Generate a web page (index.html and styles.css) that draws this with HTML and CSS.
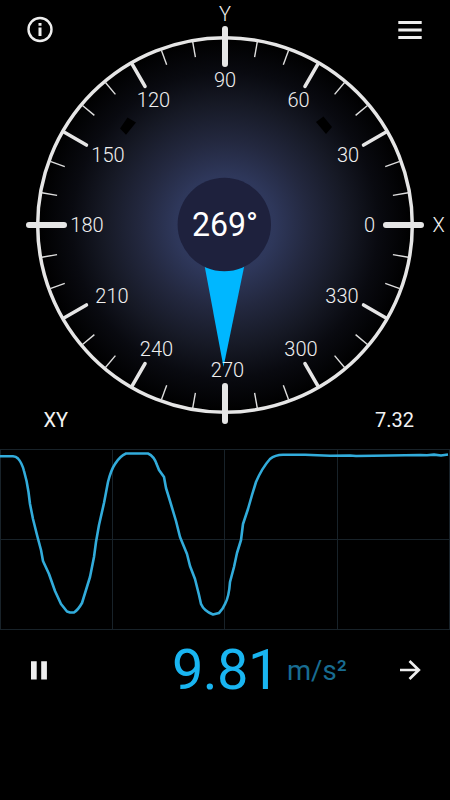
FILE: index.html
```html
<!DOCTYPE html>
<html lang="en">
<head>
<meta charset="utf-8">
<title>Accelerometer</title>
<link rel="stylesheet" href="styles.css">
</head>
<body>
<main class="app">
  <section class="gauge">
    <svg class="dial" width="450" height="440" viewBox="0 0 450 440">
      <defs>
        <radialGradient id="glow" gradientUnits="userSpaceOnUse" cx="225" cy="225" r="187">
          <stop offset="0" stop-color="#38436d"/>
          <stop offset=".27" stop-color="#2e375a"/>
          <stop offset=".45" stop-color="#23283f"/>
          <stop offset=".65" stop-color="#161925"/>
          <stop offset=".82" stop-color="#090a10"/>
          <stop offset="1" stop-color="#000"/>
        </radialGradient>
      </defs>
      <circle cx="225" cy="225" r="187.3" fill="url(#glow)" stroke="#e6e6e6" stroke-width="3.5"/>
      <path class="mark" d="M127.500 117.500L136 122.500L126 134.800L120 128.500Z"/>
      <path class="mark" d="M323.500 116.500L332 127L326 134L316 122Z"/>
      <g id="ticks"></g>
      <path class="cardinal" d="M29 225H64M386 225H421M225 29V64M225 386V421"/>
      <path class="needle" d="M203.5 260H245.500L223.500 367Z"/>
      <circle class="hub" cx="224.300" cy="224.500" r="46.700"/>
      <text class="heading" x="225" y="235.500" textLength="66" lengthAdjust="spacingAndGlyphs">269°</text>
      <g class="label">
        <text x="225" y="87">90</text><text x="298.500" y="107">60</text>
        <text x="348" y="162">30</text><text x="369.500" y="232">0</text>
        <text x="342" y="303">330</text><text x="301" y="356">300</text>
        <text x="227.500" y="377">270</text><text x="156.500" y="356">240</text>
        <text x="112" y="303">210</text><text x="87" y="232">180</text>
        <text x="108" y="162">150</text><text x="153.500" y="107">120</text>
        <text x="225" y="21">Y</text><text x="438.500" y="232">X</text>
      </g>
    </svg>
    <header class="toolbar">
      <svg width="28" height="28" viewBox="0 0 28 28"><circle cx="14" cy="14.500" r="11.500" fill="none" stroke="#eee" stroke-width="2.400"/><path fill="#eee" d="M12.500 8h3v2.800h-3zM12.500 12.500h3v8.500h-3z"/></svg>
      <svg width="28" height="28" viewBox="0 0 28 28"><path d="M2.300 7.500H25.700M2.300 15H25.700M2.300 22.500H25.700" stroke="#eee" stroke-width="2.800"/></svg>
    </header>
    <div class="readings"><span>XY</span><span>7.32</span></div>
  </section>
  <svg class="chart" width="450" height="200" viewBox="0 440 450 200">
    <path class="grid" d="M0 449.500H450M0 539.500H450M0 629.500H450M.5 450V630M112.500 450V630M224.500 450V630M337.500 450V630M449.500 450V630"/>
    <path class="trace" d="M0 456.300H13Q16 456.500 18 458.500Q22 463 24 471Q27 481 28.500 492L30 504L33 519L37 535L41 550L43 561L49 574L55 591L61 604L67 611.500L70 612.500L74 612.500Q78 610 82 603L86 590L90 577L94 557L96 542L99 525L104 503L108 482Q111 470 115 464Q120 456 126 453.500H148Q154 456 157 465L159 470L164 477L166 488L170 501L176 521L180 537L187 554L190 566L195 579L199 595L201 604Q204 611 213 614.500L219 613Q223 609 225 604Q229 597 230 582L234 567L237 553L241 540L243 524L248 509L252 495L256 482Q262 468 270 459Q275 455 283 454.800H305L330 455.700L350 455.500L356 456L390 455.500L420 455L427 455.300L434 454.600L441 455.500L448 454.500"/>
  </svg>
  <footer class="footer">
    <svg width="28" height="28" viewBox="0 0 28 28"><path fill="#eee" d="M6 5.300h5.700v18.200H6zM16.200 5.300h5.700v18.200h-5.700z"/></svg>
    <div class="value"><strong>9.81</strong><span>m/s²</span></div>
    <svg width="28" height="28" viewBox="0 0 28 28"><path d="M4 14H22M13.500 5L22.800 14L13.500 23" fill="none" stroke="#eee" stroke-width="2.700"/></svg>
  </footer>
</main>
<script src="dial.js"></script>
</body>
</html>
```
FILE: styles.css
```css
* { box-sizing: border-box; }
body { margin: 0; background: #000; color: #f2f2f2; font-family: Roboto, sans-serif; }
svg { display: block; }
.app { width: 450px; height: 800px; overflow: hidden; background: #000; }
.gauge { display: grid; grid-template-rows: 60px 1fr 40px; height: 440px; }
.dial { grid-area: 1 / 1 / 4 / 2; }
.toolbar { grid-area: 1 / 1; display: flex; justify-content: space-between; padding: 15px 26px 0; }
.readings { grid-area: 3 / 1; display: flex; justify-content: space-between; align-items: center; padding: 0 36px 0 43.5px; font-size: 20px; }
.mark { fill: #000; }
.tick { stroke: #dedede; stroke-width: 1.4; }
.tick-major { stroke: #e6e6e6; stroke-width: 3.6; stroke-linecap: round; }
.cardinal { stroke: #e6e6e6; stroke-width: 6; stroke-linecap: round; }
.needle { fill: #00b7ff; }
.hub { fill: #1e213d; }
.heading { font-size: 33px; fill: #fff; text-anchor: middle; }
.label { font-size: 20px; font-weight: 300; fill: #f0f0f0; text-anchor: middle; }
.grid { stroke: #182229; stroke-width: 1; fill: none; }
.trace { stroke: #32acdb; stroke-width: 2.6; stroke-linejoin: round; fill: none; }
.footer { display: grid; grid-template-columns: 147px 1fr 54px; align-items: center; height: 80px; margin-top: -10px; padding-left: 25px; }
.value { display: flex; align-items: center; }
.value strong { width: 115px; font-size: 56px; font-weight: 400; letter-spacing: -.6px; color: #19b5f1; }
.value span { font-size: 27.5px; color: #186c91; }
```
FILE: dial.js
```javascript
const ticks = document.getElementById('ticks');
for (let deg = 0; deg < 360; deg += 10) {
  if (deg % 90 === 0) continue;
  const major = deg % 30 === 0;
  const angle = deg * Math.PI / 180;
  const inner = major ? 160 : 170.5;
  const line = document.createElementNS('http://www.w3.org/2000/svg', 'line');
  line.setAttribute('class', major ? 'tick-major' : 'tick');
  line.setAttribute('x1', 225 + inner * Math.cos(angle));
  line.setAttribute('y1', 225 - inner * Math.sin(angle));
  line.setAttribute('x2', 225 + 186 * Math.cos(angle));
  line.setAttribute('y2', 225 - 186 * Math.sin(angle));
  ticks.appendChild(line);
}
```
